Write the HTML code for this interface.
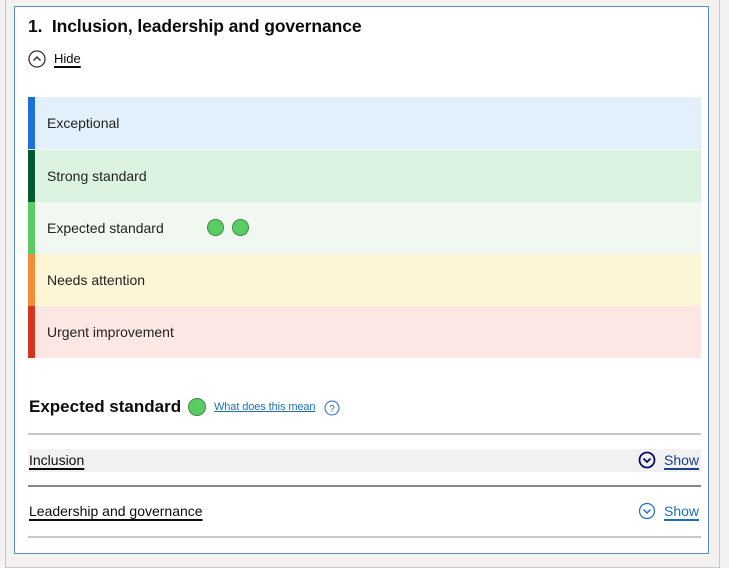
<!DOCTYPE html>
<html><head><style>
*{margin:0;padding:0;box-sizing:border-box}
body{width:729px;height:562px;background:#f3f2f1;font-family:"Liberation Sans",sans-serif;color:#0b0c0c;position:relative;overflow:hidden}
.outer{position:absolute;left:5px;top:-2px;width:715px;height:570px;border:1px solid #c8c8c8;background:#f3f2f1}
.box{position:absolute;left:14px;top:6px;width:695px;height:548px;background:#fff;border:1px solid #5a8cc8}
.abs{position:absolute}
h1{position:absolute;left:28px;top:16px;font-size:17.5px;font-weight:bold;letter-spacing:-0.1px}
.row{position:absolute;left:28px;width:673px;height:52px;font-size:14px;color:#222;padding-left:19px;line-height:52px}
.row i{position:absolute;left:0;top:0;width:7px;height:100%}
.dot{position:absolute;width:17px;height:17px;border-radius:50%;background:#5bcb64;border:1px solid #3c8f44}
a{color:#1d70b8;text-decoration:underline}
.line{position:absolute;left:28px;width:673px;height:2px;background:#c8c8c8}
.lk{position:absolute;font-size:14px;color:#0b0c0c;text-decoration:underline;text-decoration-thickness:2px;text-underline-offset:3px}
</style></head><body>
<div class="outer"></div>
<div class="box"></div>
<h1>1.&nbsp; Inclusion, leadership and governance</h1>
<svg class="abs" style="left:28px;top:50px" width="18" height="18"><circle cx="9" cy="9" r="8" fill="none" stroke="#333" stroke-width="1.3"/><path d="M5.5 10.5 L9 7 L12.5 10.5" fill="none" stroke="#333" stroke-width="1.5"/></svg>
<div class="lk" style="left:54px;top:51px;font-size:13px">Hide</div>
<div style="position:absolute;left:28px;top:97px;width:673px;height:261px;border:1px solid #d8dde2"></div>
<div class="row" style="top:97px;background:#e2f0fb"><i style="background:#1d70d8"></i>Exceptional</div>
<div class="row" style="top:150px;background:#dcf3e1"><i style="background:#005a30"></i>Strong standard</div>
<div class="row" style="top:202px;background:#f1f8f2"><i style="background:#5bcb64"></i>Expected standard</div>
<div class="dot" style="left:207px;top:219px"></div>
<div class="dot" style="left:232px;top:219px"></div>
<div class="row" style="top:254px;background:#fcf5d6"><i style="background:#f68b3c"></i>Needs attention</div>
<div class="row" style="top:306px;background:#fce7e5"><i style="background:#d4351c"></i>Urgent improvement</div>
<div class="abs" style="left:29px;top:397px;font-size:17px;font-weight:bold">Expected standard</div>
<div class="dot" style="left:188px;top:398px;width:18px;height:18px"></div>
<div class="abs" style="left:214px;top:401px;font-size:11px;letter-spacing:-0.1px"><a>What does this mean</a></div>
<svg class="abs" style="left:324px;top:400px" width="16" height="16"><circle cx="8" cy="8" r="7" fill="none" stroke="#1d70b8" stroke-width="1"/><text x="8" y="12" font-size="10" text-anchor="middle" fill="#1d70b8" font-family="Liberation Sans">?</text></svg>
<div class="line" style="top:433px"></div>
<div class="abs" style="left:28px;top:449px;width:673px;height:23px;background:#f1f1f1"></div>
<div class="lk" style="left:29px;top:452px">Inclusion</div>
<svg class="abs" style="left:638px;top:451px" width="18" height="18"><circle cx="9" cy="9" r="7.5" fill="none" stroke="#0b0c6c" stroke-width="1.8"/><path d="M5.5 7.5 L9 11 L12.5 7.5" fill="none" stroke="#0b0c6c" stroke-width="1.8"/></svg>
<div class="lk" style="left:664px;top:452px;color:#1d3f8a">Show</div>
<div class="line" style="top:485px;background:#888"></div>
<div class="lk" style="left:29px;top:503px">Leadership and governance</div>
<svg class="abs" style="left:638px;top:502px" width="18" height="18"><circle cx="9" cy="9" r="7.5" fill="none" stroke="#1d70b8" stroke-width="1.2"/><path d="M5.5 7.5 L9 11 L12.5 7.5" fill="none" stroke="#1d70b8" stroke-width="1.4"/></svg>
<div class="lk" style="left:664px;top:503px;color:#1d70b8">Show</div>
<div class="line" style="top:536px"></div>
</body></html>
